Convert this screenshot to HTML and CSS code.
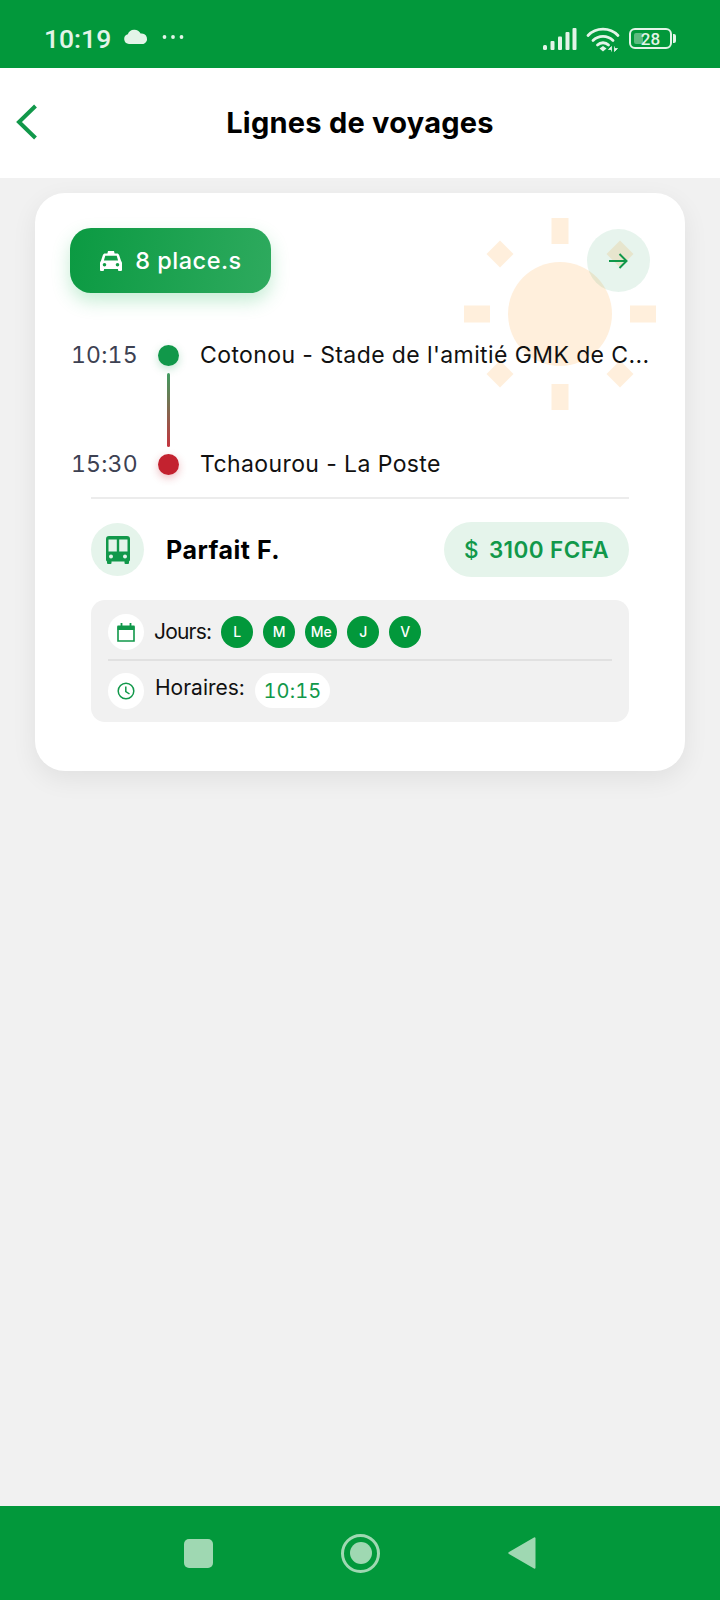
FILE: index.html
```html
<!DOCTYPE html>
<html lang="fr">
<head>
<meta charset="utf-8">
<title>Lignes de voyages</title>
<link rel="stylesheet" href="styles.css">
</head>
<body>
<div class="screen">
  <div class="statusbar">
    <div class="status-left">
      <span class="clock">10:19</span>
      <svg class="cloud" width="26" height="16" viewBox="0 0 26 16"><path d="M6 15a5 5 0 0 1-1.200-9.800A7 7 0 0 1 17.600 4.600 5.400 5.400 0 0 1 20.400 15Z" fill="#e3f4e8"/></svg>
      <svg class="dots" width="22" height="6" viewBox="0 0 22 6"><circle cx="2.500" cy="3" r="1.900" fill="#e3f4e8"/><circle cx="11" cy="3" r="1.900" fill="#e3f4e8"/><circle cx="19.500" cy="3" r="1.900" fill="#e3f4e8"/></svg>
    </div>
    <div class="status-right">
      <svg width="34" height="24" viewBox="0 0 34 24"><g fill="#e3f4e8"><rect x="0" y="18" width="4" height="5" rx="1.500"/><rect x="7.500" y="14" width="4" height="9" rx="1"/><rect x="15" y="9.500" width="4" height="13.500" rx="1"/><rect x="22.500" y="5" width="4" height="18" rx="1"/><rect x="29.500" y="1" width="4" height="22" rx="1"/></g></svg>
      <svg class="wifi" width="34" height="26" viewBox="0 0 34 26"><g fill="none" stroke="#e3f4e8" stroke-width="2.800" stroke-linecap="round"><path d="M2 9.500C10 1 24 1 32 9.500"/><path d="M7 14.500C12.500 9 21.500 9 27 14.500"/><path d="M11.500 19C14.500 16 19.500 16 22.500 19"/></g><path d="M13.500 22.500 17 20 20.500 22.500 17 25.500Z" fill="#e3f4e8"/><path d="M25.500 25.500v-5l-3 3h3M28.500 20.500v5l3-3h-3" fill="#e3f4e8" stroke="#e3f4e8" stroke-width=".8"/></svg>
      <div class="battery">
        <div class="batt-body"><span class="batt-fill"></span><span class="batt-num">28</span></div>
        <span class="batt-tip"></span>
      </div>
    </div>
  </div>

  <header class="appbar">
    <svg class="back" width="24" height="36" viewBox="0 0 24 36"><path d="M20.500 2 4 18 20.500 34" fill="none" stroke="#11984a" stroke-width="4"/></svg>
    <h1 class="title">Lignes de voyages</h1>
  </header>

  <main class="content">
    <section class="card">
      <svg class="sun" width="192" height="192" viewBox="0 0 192 192">
        <g fill="#ffefdc">
          <circle cx="96" cy="96" r="52"/>
          <rect x="87.500" y="0" width="17" height="26"/>
          <rect x="87.500" y="166" width="17" height="26"/>
          <rect x="0" y="87.500" width="26" height="17"/>
          <rect x="166" y="87.500" width="26" height="17"/>
          <path d="M36 22.500 49.500 36 36 49.500 22.500 36Z"/>
          <path d="M156 22.500 169.500 36 156 49.500 142.500 36Z"/>
          <path d="M36 142.500 49.500 156 36 169.500 22.500 156Z"/>
          <path d="M156 142.500 169.500 156 156 169.500 142.500 156Z"/>
        </g>
      </svg>

      <div class="top-row">
        <div class="seats">
          <svg width="24" height="22" viewBox="0 0 24 22"><path fill="#fff" d="M9 1h6l.6 2.500H18c1 0 1.800.6 2.100 1.500l2 6c.6.500.9 1.200.9 2v7a1 1 0 0 1-1 1h-2a1 1 0 0 1-1-1v-1H5v1a1 1 0 0 1-1 1H2a1 1 0 0 1-1-1v-7c0-.8.300-1.500.9-2l2-6C4.200 4.100 5 3.500 6 3.500h2.400ZM6.300 5.800 4.900 10.500h14.200l-1.400-4.700ZM5.500 13a1.800 1.800 0 1 0 0 3.600 1.800 1.800 0 0 0 0-3.600Zm13 0a1.800 1.800 0 1 0 0 3.600 1.800 1.800 0 0 0 0-3.600Z"/></svg>
          <span>8 place.s</span>
        </div>
        <button class="go">
          <svg width="19" height="16" viewBox="0 0 19 16"><path d="M0 8h17.500M10.500 1l7 7-7 7" fill="none" stroke="#11984a" stroke-width="2"/></svg>
        </button>
      </div>

      <div class="route">
        <div class="stop">
          <span class="time">10:15</span>
          <span class="dot dot-green"></span>
          <span class="place">Cotonou - Stade de l'amitié GMK de C...</span>
        </div>
        <div class="link"><span class="link-line"></span></div>
        <div class="stop">
          <span class="time">15:30</span>
          <span class="dot dot-red"></span>
          <span class="place">Tchaourou - La Poste</span>
        </div>
      </div>

      <div class="details">
        <div class="driver-row">
          <div class="driver">
            <span class="bus-badge">
              <svg width="26" height="28" viewBox="0 0 26 28"><path fill="#11984a" fill-rule="evenodd" d="M4 0h18a3 3 0 0 1 3 3v21a1.500 1.500 0 0 1-1 1.400V27a1 1 0 0 1-1 1h-2.500a1 1 0 0 1-1-1v-1.500H6.500V27a1 1 0 0 1-1 1H3a1 1 0 0 1-1-1v-1.600A1.500 1.500 0 0 1 1 24V3a3 3 0 0 1 3-3ZM3.500 3.500v12h8.300v-12Zm10.700 0v12h8.300v-12ZM6 18.500a2 2 0 1 0 0 4 2 2 0 0 0 0-4Zm14 0a2 2 0 1 0 0 4 2 2 0 0 0 0-4Z"/></svg>
            </span>
            <span class="driver-name">Parfait F.</span>
          </div>
          <div class="price"><span class="dollar">$</span><span>3100 FCFA</span></div>
        </div>

        <div class="panel">
          <div class="panel-row row-days">
            <span class="icon-badge">
              <svg width="20" height="20" viewBox="0 0 20 20"><path d="M2 5h16v14H2Z" fill="none" stroke="#11984a" stroke-width="1.600"/><path d="M1.500 3.500h17V8h-17Z" fill="#11984a"/><path d="M5.500 1v3M14.500 1v3" stroke="#11984a" stroke-width="1.800"/></svg>
            </span>
            <span class="label label-days">Jours:</span>
            <div class="days">
              <span class="day">L</span>
              <span class="day">M</span>
              <span class="day">Me</span>
              <span class="day">J</span>
              <span class="day">V</span>
            </div>
          </div>
          <div class="panel-row row-hours">
            <span class="icon-badge">
              <svg width="18" height="18" viewBox="0 0 18 18"><circle cx="9" cy="9" r="7.800" fill="none" stroke="#11984a" stroke-width="1.500"/><path d="M8.800 4.500V9.500L12.500 12" fill="none" stroke="#11984a" stroke-width="1.500"/></svg>
            </span>
            <span class="label label-hours">Horaires:</span>
            <span class="hour">10:15</span>
          </div>
        </div>
      </div>
    </section>
  </main>

  <nav class="navbar">
    <span class="nav-square"></span>
    <span class="nav-home"><span class="nav-home-dot"></span></span>
    <svg width="28" height="34" viewBox="0 0 28 34"><path d="M26 1.500a1 1 0 0 1 1.500 1v29a1 1 0 0 1-1.500 1L1 18a1.200 1.200 0 0 1 0-2Z" fill="#9fd8b2"/></svg>
  </nav>
</div>
</body>
</html>
```

FILE: styles.css
```css
* { box-sizing: border-box; }
html, body { margin: 0; padding: 0; }
body { font-family: "Inter", "Open Sans", sans-serif; background: #f1f1f1; color: #000; }
.screen { width: 720px; height: 1600px; display: flex; flex-direction: column; overflow: hidden; }

.statusbar { height: 68px; background: #02983b; display: flex; justify-content: space-between; align-items: center; padding: 0 44px; flex-shrink: 0; }
.status-left { display: flex; align-items: center; padding-top: 9px; }
.clock { font-family: "Roboto", sans-serif; font-weight: 500; font-size: 26.500px; color: #e3f4e8; line-height: 30px; }
.cloud { margin-left: 12px; margin-bottom: 3px; }
.dots { margin-left: 13px; margin-bottom: 3px; }
.status-right { display: flex; align-items: center; gap: 9px; padding-top: 9px; }
.battery { display: flex; align-items: center; gap: 1px; }
.batt-body { width: 43px; height: 21px; border: 2px solid #e3f4e8; border-radius: 6px; display: flex; align-items: center; justify-content: center; position: relative; }
.batt-fill { position: absolute; left: 3px; top: 3px; bottom: 3px; width: 9px; background: #5dbb7f; border-radius: 2px; }
.batt-num { font-family: "Roboto", sans-serif; font-weight: 500; font-size: 17px; color: #e3f4e8; position: relative; line-height: 18px; }
.batt-tip { width: 3px; height: 9px; background: #e3f4e8; border-radius: 0 2px 2px 0; }

.appbar { height: 110px; background: #fff; display: flex; align-items: center; justify-content: center; position: relative; flex-shrink: 0; }
.back { position: absolute; left: 15px; top: 36px; }
.title { margin: 0; font-size: 29px; font-weight: 700; line-height: 40px; margin-top: -1px; letter-spacing: .25px; }

.content { flex: 1; padding: 15px 35px 0; }
.card { position: relative; width: 650px; height: 578px; background: #fff; border-radius: 30px; box-shadow: 0 8px 26px rgba(0,0,0,.07); padding: 35px 35px 0; }
.sun { position: absolute; left: 429px; top: 25px; }

.top-row { position: relative; display: flex; justify-content: space-between; align-items: center; height: 65px; }
.seats { width: 201px; height: 65px; border-radius: 21px; background: linear-gradient(100deg, #0b9a42, #2eaa5e); box-shadow: 0 8px 18px rgba(46,190,100,.28); display: flex; align-items: center; justify-content: center; gap: 12px; color: #fff; font-size: 23.500px; font-weight: 500; letter-spacing: .5px; }
.go { width: 63px; height: 63px; border-radius: 50%; border: 0; padding: 0; background: rgba(17,152,74,.1); display: flex; align-items: center; justify-content: center; }

.route { position: relative; margin-top: 43px; }
.stop { display: flex; align-items: center; height: 38px; }
.time { width: 87px; font-size: 23px; color: #3d4152; padding-left: 1px; flex-shrink: 0; font-variant-numeric: tabular-nums; letter-spacing: .2px; }
.dot { width: 21px; height: 21px; border-radius: 50%; flex-shrink: 0; margin-left: 1px; }
.dot-green { background: #11984a; box-shadow: 0 3px 8px rgba(17,152,74,.25); }
.dot-red { background: #c3222f; box-shadow: 0 3px 8px rgba(195,34,47,.3); }
.place { margin-left: 21px; font-size: 23px; color: #111; white-space: nowrap; letter-spacing: .4px; }
.link { height: 71px; padding-left: 97px; display: flex; align-items: center; }
.link-line { width: 3px; height: 74px; border-radius: 2px; background: linear-gradient(#3f9c5f, #c5353f); flex-shrink: 0; }

.details { margin: 14px 9px 0 21px; border-top: 2px solid #ececec; padding-top: 23px; position: relative; width: 538px; }
.driver-row { display: flex; justify-content: space-between; align-items: center; height: 55px; }
.driver { display: flex; align-items: center; gap: 22px; }
.bus-badge { width: 53px; height: 53px; border-radius: 50%; background: #e5f4eb; display: flex; align-items: center; justify-content: center; }
.driver-name { font-size: 25px; font-weight: 700; letter-spacing: .5px; }
.price { width: 185px; height: 55px; border-radius: 28px; background: #e5f4eb; color: #11984a; font-size: 22.500px; font-weight: 600; display: flex; align-items: center; justify-content: center; gap: 10px; letter-spacing: .4px; }
.dollar { font-weight: 500; }

.panel { margin-top: 23px; height: 122px; border-radius: 14px; background: #f1f1f1; padding: 0 17px; }
.panel-row { display: flex; align-items: center; }
.row-days { height: 61px; border-bottom: 2px solid #e1e1e1; padding-top: 4px; }
.row-hours { height: 59px; }
.icon-badge { width: 36px; height: 36px; border-radius: 50%; background: #fff; display: flex; align-items: center; justify-content: center; flex-shrink: 0; }
.label { margin-left: 9px; font-size: 21px; color: #111; }
.label-days { letter-spacing: -.8px; margin-left: 10px; }
.label-hours { margin-bottom: 6px; margin-left: 11px; }
.days { display: flex; gap: 10px; margin-left: 10px; }
.day { width: 32px; height: 32px; border-radius: 50%; background: #02983b; color: #fff; font-size: 14px; font-weight: 500; display: flex; align-items: center; justify-content: center; }
.hour { margin-left: 10px; width: 75px; height: 35px; border-radius: 18px; background: #fff; color: #11984a; font-size: 20px; font-weight: 400; display: flex; align-items: center; justify-content: center; font-variant-numeric: tabular-nums; letter-spacing: .1px; }

.navbar { height: 94px; background: #02983b; display: flex; align-items: center; flex-shrink: 0; padding: 0 184px; justify-content: space-between; }
.nav-square { width: 29px; height: 29px; border-radius: 5px; background: #9fd8b2; }
.nav-home { width: 39px; height: 39px; border-radius: 50%; border: 3px solid #9fd8b2; display: flex; align-items: center; justify-content: center; }
.nav-home-dot { width: 22px; height: 22px; border-radius: 50%; background: #9fd8b2; }
```
